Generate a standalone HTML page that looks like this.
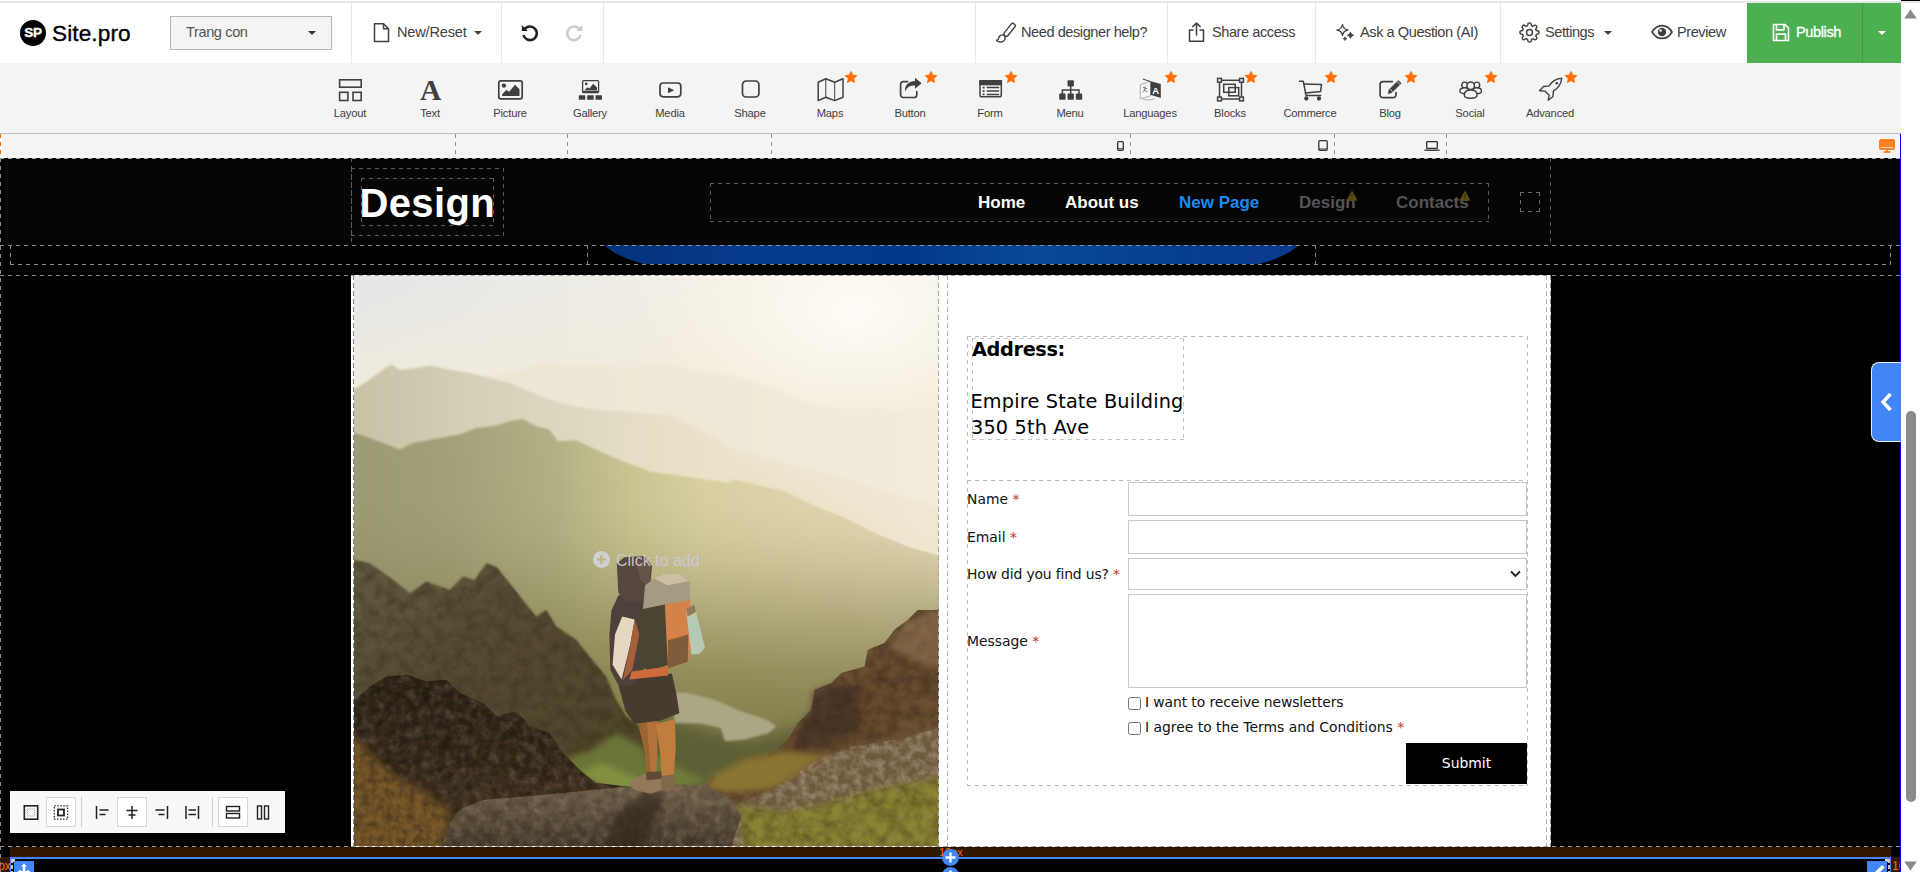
<!DOCTYPE html>
<html lang="en">
<head>
<meta charset="utf-8">
<title>Site.pro Builder</title>
<style>
*{box-sizing:border-box;margin:0;padding:0}
html,body{width:1920px;height:872px;overflow:hidden;background:#000;font-family:"Liberation Sans",sans-serif;}
body{position:relative}
.abs{position:absolute}
/* ---------- top bar ---------- */
#topbar{position:absolute;left:0;top:0;width:1901px;height:63px;background:#fff}
#topline{position:absolute;left:0;top:1px;width:1920px;height:2px;background:#e6e6ec}
.vsep{position:absolute;top:3px;width:1px;height:60px;background:#e9e9e9}
.tb-txt{position:absolute;top:0;height:63px;line-height:64px;font-size:14.6px;letter-spacing:-0.45px;color:#404040;white-space:nowrap}
.caret{position:absolute;width:0;height:0;border-left:4px solid transparent;border-right:4px solid transparent;border-top:4px solid #404040}
#logo-c{position:absolute;left:20px;top:20px;width:26px;height:26px;border-radius:50%;background:#000;color:#fff;font-weight:bold;font-size:13.5px;line-height:26.500px;text-align:center;letter-spacing:-0.2px;-webkit-text-stroke:.4px #fff}
#logo-t{position:absolute;left:52px;top:15px;font-size:22.6px;line-height:38px;color:#000;letter-spacing:0.1px;-webkit-text-stroke:0.35px #000}
#pagesel{position:absolute;left:170px;top:16px;width:162px;height:34px;border:1px solid #b5b5b5;background:#f4f4f4;font-size:14.6px;letter-spacing:-0.4px;line-height:31px;color:#555;padding-left:15px}
#publish{position:absolute;left:1747px;top:3px;width:154px;height:60px;background:#4caf50}
#publish .div{position:absolute;left:115px;top:0;width:1px;height:60px;background:#439a46}
#publish .t{position:absolute;left:49px;top:0;line-height:59px;font-size:14.6px;letter-spacing:-0.4px;color:#fff;-webkit-text-stroke:0.3px #fff}
/* ---------- tool bar ---------- */
#toolbar{position:absolute;left:0;top:63px;width:1901px;height:70px;background:#f4f4f4}
#toolline{position:absolute;left:0;top:133px;width:1901px;height:1px;background:#bdbdbd}
.tool{position:absolute;top:0;width:80px;height:70px;text-align:center}
.tool svg{position:absolute;left:24px;top:13px;width:32px;height:28px;overflow:visible}
.tool .lb{position:absolute;left:-10px;width:100px;top:43px;font-size:11.2px;letter-spacing:-0.2px;line-height:14px;color:#404040;text-align:center}
.tool .star{position:absolute;left:54px;top:7px;width:14px;height:14px}
/* ---------- ruler ---------- */
#ruler{position:absolute;left:0;top:134px;width:1901px;height:24px;background:#f6f3f6}
.rd{position:absolute;top:0;width:1px;height:24px;background:repeating-linear-gradient(180deg,#8f8f8f 0 4.5px,transparent 4.5px 8px)}
/* ---------- canvas ---------- */
#canvas{position:absolute;left:0;top:158px;width:1901px;height:714px;background:#000;overflow:hidden}
#hdr{position:absolute;left:0;top:0;width:1901px;height:87px;background:#050505}
.dh{position:absolute;height:1px;background:repeating-linear-gradient(90deg,var(--c,#8a8a8a) 0 4.5px,transparent 4.5px 8px)}
.dv{position:absolute;width:1px;background:repeating-linear-gradient(180deg,var(--c,#8a8a8a) 0 4.5px,transparent 4.5px 8px)}
.dbox{position:absolute;--c:#6e6e6e;background:repeating-linear-gradient(90deg,var(--c) 0 4.5px,transparent 4.5px 8px) top left/100% 1px no-repeat,repeating-linear-gradient(90deg,var(--c) 0 4.5px,transparent 4.5px 8px) bottom left/100% 1px no-repeat,repeating-linear-gradient(180deg,var(--c) 0 4.5px,transparent 4.5px 8px) top left/1px 100% no-repeat,repeating-linear-gradient(180deg,var(--c) 0 4.5px,transparent 4.5px 8px) top right/1px 100% no-repeat}
.nav{position:absolute;top:35px;font-weight:bold;font-size:17px;line-height:20px;color:#fff;white-space:nowrap}
/* ---------- card ---------- */
#card{position:absolute;left:351px;top:117px;width:1200px;height:572px;background:#fff}
.pp{font-family:"DejaVu Sans","Liberation Sans",sans-serif}
.flabel{position:absolute;left:616px;font-family:"DejaVu Sans","Liberation Sans",sans-serif;font-size:13.900px;line-height:20px;color:#111;white-space:nowrap}
.req{color:#c0392b;-webkit-text-stroke:0}
.finput{position:absolute;left:777px;width:399px;border:1px solid #c9c9c9;background:#fff}
.cb{position:absolute;left:777px;width:13px;height:13px;border:1px solid #6f6f6f;border-radius:2.5px;background:#fff}
/* ---------- overlays ---------- */
#alignbar{position:absolute;left:10px;top:791px;width:275px;height:42px;background:#f8f8f8}
.ab{position:absolute;top:6px;width:30px;height:30px}
.ab.on{background:#fff;border:1px solid #d6d6d6}
.ab svg{position:absolute;left:0;top:0;width:30px;height:30px}
.absep{position:absolute;top:6px;width:1px;height:30px;background:#cfcfcf}
#sb{position:absolute;left:1901px;top:3px;width:19px;height:869px;background:#fff}
#sbthumb{position:absolute;left:5px;top:408px;width:10px;height:391px;border-radius:5px;background:#8b8b8b}
</style>
</head>
<body>
<!-- TOPBAR -->
<div id="topbar">
  <div id="logo-c">SP</div>
  <div id="logo-t">Site.pro</div>
  <div id="pagesel">Trang con<div class="caret" style="left:137px;top:14px;border-top-color:#333"></div></div>
  <div class="vsep" style="left:351px"></div>
  <div class="vsep" style="left:501px"></div>
  <div class="vsep" style="left:603px"></div>
  <div class="vsep" style="left:975px"></div>
  <div class="vsep" style="left:1167px"></div>
  <div class="vsep" style="left:1315px"></div>
  <div class="vsep" style="left:1500px"></div>
  <!-- icons -->
  <svg class="abs" style="left:372px;top:22px" width="20" height="22" viewBox="0 0 20 22" fill="none" stroke="#404040" stroke-width="1.5" stroke-linejoin="round"><path d="M2.5 1.8h9l5 5v12.6h-14z"/><path d="M11.5 1.8v5h5"/></svg>
  <div class="tb-txt" style="left:397px;letter-spacing:-0.2px">New/Reset</div>
  <div class="caret" style="left:474px;top:31px"></div>
  <svg class="abs" style="left:520px;top:23px" width="20" height="20" viewBox="0 0 20 20" fill="none" stroke="#222" stroke-width="2.600"><path d="M4.400 6.400A6.800 6.800 0 1 1 3.400 12"/><path d="M1.800 2v6h6" fill="#222" stroke="none"/></svg>
  <svg class="abs" style="left:564px;top:23px" width="20" height="20" viewBox="0 0 20 20" fill="none" stroke="#cdcdcd" stroke-width="2.600"><path d="M15.600 6.400A6.800 6.800 0 1 0 16.600 12"/><path d="M18.200 2v6h-6" fill="#cdcdcd" stroke="none"/></svg>
  <svg class="abs" style="left:995px;top:22px" width="21" height="21" viewBox="0 0 21 21" fill="none" stroke="#404040" stroke-width="1.400" stroke-linecap="round" stroke-linejoin="round"><rect x="-7.600" y="-2.300" width="15.200" height="4.600" rx="2.300" transform="translate(14.500 7.900) rotate(-51.300)"/><path d="M9.200 13.400c-2.500-1.300-5.200.2-5.500 2.600-.2 1.500-1 2.200-2.200 2.300 1.500 2 5 2.300 7.100.7 1.800-1.300 2-3.900.6-5.600z" fill="#fff"/></svg>
  <div class="tb-txt" style="left:1021px">Need designer help?</div>
  <svg class="abs" style="left:1187px;top:21px" width="19" height="22" viewBox="0 0 19 22" fill="none" stroke="#404040" stroke-width="1.5" stroke-linecap="round" stroke-linejoin="round"><path d="M6 9H2.5v11.200h14V9H13"/><path d="M9.500 14V2.200M5.800 5.600l3.700-3.600 3.700 3.600"/></svg>
  <div class="tb-txt" style="left:1212px">Share access</div>
  <svg class="abs" style="left:1335px;top:22px" width="20" height="20" viewBox="0 0 20 20" fill="none" stroke="#404040" stroke-width="1.300" stroke-linejoin="round"><path d="M7.500 2.500c.6 3.600 1.900 4.900 5.500 5.500-3.600.6-4.900 1.900-5.500 5.500C6.900 9.900 5.600 8.600 2 8c3.600-.6 4.900-1.900 5.500-5.500z"/><path d="M15.500 10.500c.3 1.800.9 2.400 2.700 2.700-1.800.3-2.400.9-2.700 2.700-.3-1.800-.9-2.400-2.700-2.700 1.800-.3 2.400-.9 2.700-2.700z" fill="#404040"/><path d="M10 14.800c.2 1.300.6 1.700 1.900 1.900-1.300.2-1.700.6-1.900 1.900-.2-1.300-.6-1.700-1.900-1.900 1.300-.2 1.700-.6 1.900-1.900z" fill="#404040" stroke-width=".8"/></svg>
  <div class="tb-txt" style="left:1360px">Ask a Question (AI)</div>
  <svg class="abs" style="left:1519px;top:22px" width="21" height="21" viewBox="0 0 24 24" fill="none" stroke="#404040" stroke-width="1.700" stroke-linejoin="round"><circle cx="12" cy="12" r="3.400"/><path d="M19.400 15a1.650 1.650 0 0 0 .33 1.820l.06.06a2 2 0 1 1-2.830 2.830l-.06-.06a1.650 1.650 0 0 0-1.820-.33 1.650 1.650 0 0 0-1 1.510V21a2 2 0 0 1-4 0v-.09A1.650 1.650 0 0 0 9 19.400a1.650 1.650 0 0 0-1.820.33l-.06.06a2 2 0 1 1-2.830-2.830l.06-.06a1.650 1.650 0 0 0 .33-1.820 1.650 1.650 0 0 0-1.510-1H3a2 2 0 0 1 0-4h.09A1.650 1.650 0 0 0 4.600 9a1.650 1.650 0 0 0-.33-1.820l-.06-.06a2 2 0 1 1 2.830-2.830l.06.06a1.650 1.650 0 0 0 1.820.33H9a1.650 1.650 0 0 0 1-1.510V3a2 2 0 0 1 4 0v.09a1.650 1.650 0 0 0 1 1.510 1.650 1.650 0 0 0 1.820-.33l.06-.06a2 2 0 1 1 2.830 2.830l-.06.06a1.650 1.650 0 0 0-.33 1.820V9a1.650 1.650 0 0 0 1.510 1H21a2 2 0 0 1 0 4h-.09a1.650 1.650 0 0 0-1.510 1z"/></svg>
  <div class="tb-txt" style="left:1545px">Settings</div>
  <div class="caret" style="left:1604px;top:31px"></div>
  <svg class="abs" style="left:1651px;top:24px" width="22" height="16" viewBox="0 0 22 16" fill="none" stroke="#404040" stroke-width="1.600"><path d="M1 8c2.500-4.300 6-6.400 10-6.400S18.500 3.700 21 8c-2.500 4.300-6 6.400-10 6.400S3.500 12.300 1 8z"/><circle cx="11" cy="8" r="4.200" fill="#404040" stroke="none"/><circle cx="9.600" cy="6.500" r="1.300" fill="#fff" stroke="none"/></svg>
  <div class="tb-txt" style="left:1677px">Preview</div>
</div>
<div id="publish">
  <svg class="abs" style="left:25px;top:20px" width="18" height="19" viewBox="0 0 18 19" fill="none" stroke="#fff" stroke-width="1.700" stroke-linejoin="round"><path d="M1.500 1.500h11.500l3.500 3.500v12.500h-15z"/><path d="M4.500 1.800v5h7.500v-5M4.500 17.200v-6h9v6"/></svg>
  <div class="t">Publish</div>
  <div class="div"></div>
  <div class="caret" style="left:131px;top:28px;border-top-color:#fff"></div>
</div>
<div id="topline"></div>

<!-- TOOLBAR -->
<div id="toolbar"><div class="tool" style="left:310px"><svg viewBox="0 0 32 28" fill="none" stroke="#404040" stroke-width="1.6"><rect x="5.600" y="3.800" width="21.600" height="7.400"/><rect x="5.600" y="16.300" width="8.300" height="8.200"/><rect x="19" y="16.300" width="8.200" height="8.200"/></svg><div class="lb">Layout</div></div>
<div class="tool" style="left:390px"><svg viewBox="0 0 32 28"><text x="16.600" y="23.700" text-anchor="middle" font-family="Liberation Serif, serif" font-weight="bold" font-size="29.500" fill="#404040">A</text></svg><div class="lb">Text</div></div>
<div class="tool" style="left:470px"><svg viewBox="0 0 32 28" fill="none" stroke="#404040" stroke-width="1.700"><rect x="4.800" y="4.800" width="23.400" height="18" rx="2"/><circle cx="9.900" cy="9.600" r="2.200" fill="#404040" stroke="none"/><path d="M8 20v-1.500l4.300-4.500 2.900 1.700 5.800-7 4.500 4.500v6.800z" fill="#404040" stroke="none"/></svg><div class="lb">Picture</div></div>
<div class="tool" style="left:550px"><svg viewBox="0 0 32 28" fill="#404040" stroke="none"><rect x="8.600" y="4.700" width="16" height="11.800" rx="1" fill="none" stroke="#404040" stroke-width="1.300"/><rect x="8.600" y="15" width="16" height="1.800"/><circle cx="12.200" cy="7.900" r="1.300"/><path d="M10.200 14.500l3.300-3.300 2 1.200 3.700-4.700 3.800 3.800v3z"/><rect x="4.800" y="19.200" width="6.500" height="4.600" rx=".6"/><rect x="13.200" y="19.200" width="6.500" height="4.600" rx=".6"/><rect x="21.500" y="19.200" width="6.500" height="4.600" rx=".6"/></svg><div class="lb">Gallery</div></div>
<div class="tool" style="left:630px"><svg viewBox="0 0 32 28" fill="none" stroke="#404040" stroke-width="1.700"><rect x="6" y="7" width="20.800" height="13.800" rx="3.200"/><path d="M14 11.300l6.200 3-6.200 3z" fill="#404040" stroke="none"/></svg><div class="lb">Media</div></div>
<div class="tool" style="left:710px"><svg viewBox="0 0 32 28" fill="none" stroke="#404040" stroke-width="1.700"><rect x="8.500" y="5" width="16.400" height="16" rx="3.600"/></svg><div class="lb">Shape</div></div>
<div class="tool" style="left:790px"><svg viewBox="0 0 32 28" fill="none" stroke="#404040" stroke-width="1.500" stroke-linejoin="round"><path d="M4.200 6.200l7.600-3.400 8.900 3.400 8.300-3.400v18.500l-8.300 3.300-8.900-3.300-7.600 3.300z"/><path d="M11.800 2.800v18.500M20.700 6.200v18.400" stroke-width="1"/></svg><svg class="star" viewBox="0 0 14 14"><path d="M7 .4l2 4.300 4.700.6-3.500 3.200.9 4.700L7 10.900l-4.100 2.300.9-4.700L.3 5.300 5 4.700z" fill="#ff6f00"/></svg><div class="lb">Maps</div></div>
<div class="tool" style="left:870px"><svg viewBox="0 0 32 28" fill="none" stroke="#404040" stroke-width="1.700" stroke-linecap="round"><path d="M22.800 15.500v3.200a2.800 2.800 0 0 1-2.800 2.800H9.400a2.800 2.800 0 0 1-2.800-2.800V8.400a2.800 2.800 0 0 1 2.800-2.800h4.200"/><path d="M21 1.700l6.600 5.500L21 12.700V9.500c-5 0-8.200 1.500-9.700 6.300-1-6 2.700-10.600 9.700-10.800z" fill="#404040" stroke="none"/></svg><svg class="star" viewBox="0 0 14 14"><path d="M7 .4l2 4.300 4.700.6-3.500 3.200.9 4.700L7 10.900l-4.100 2.300.9-4.700L.3 5.300 5 4.700z" fill="#ff6f00"/></svg><div class="lb">Button</div></div>
<div class="tool" style="left:950px"><svg viewBox="0 0 32 28" fill="none" stroke="#404040" stroke-width="1.500"><rect x="6" y="4.800" width="21.300" height="16" rx="1.800"/><rect x="6" y="4.800" width="21.300" height="3.800" fill="#404040"/><path d="M12.700 11.600h12.500M12.700 15.100h12.500M12.700 18.400h12.500" stroke-width="1.500"/><path d="M8.600 11.600h2M8.600 15.100h2M8.600 18.400h2" stroke-width="1.600"/></svg><svg class="star" viewBox="0 0 14 14"><path d="M7 .4l2 4.300 4.700.6-3.500 3.200.9 4.700L7 10.900l-4.100 2.300.9-4.700L.3 5.300 5 4.700z" fill="#ff6f00"/></svg><div class="lb">Form</div></div>
<div class="tool" style="left:1030px"><svg viewBox="0 0 32 28" fill="#404040" stroke="none"><rect x="13.500" y="4.200" width="6.400" height="6.200" rx=".8"/><rect x="5.200" y="17.600" width="6.400" height="6.200" rx=".8"/><rect x="13.500" y="17.600" width="6.400" height="6.200" rx=".8"/><rect x="21.800" y="17.600" width="6.400" height="6.200" rx=".8"/><path d="M16.700 10v8M8.400 18v-4h16.600v4" fill="none" stroke="#404040" stroke-width="1.500"/></svg><div class="lb">Menu</div></div>
<div class="tool" style="left:1110px"><svg viewBox="0 0 32 28"><path d="M6.300 8.600l10.200-3v14.300l-10.200 2.800z" fill="#fafafa" stroke="#9a9a9a" stroke-width=".8"/><path d="M8.800 3l18 5v14l-10.300-3.300V5.600z" fill="#404040"/><path d="M8.800 3l7.700 2.600" stroke="#404040" stroke-width="1"/><text x="21.700" y="18.300" text-anchor="middle" font-family="Liberation Sans, sans-serif" font-weight="bold" font-size="9.500" fill="#fff">A</text><path d="M9 11.500l4 1.200M11 10.500c.3 3-1 5-2.500 6M10 13.500c.8 1.300 2 2 3.500 2.500" fill="none" stroke="#666" stroke-width=".9"/><path d="M8.500 22.800c3 1.700 9 1.700 12.500-.3" fill="none" stroke="#9a9a9a" stroke-width=".8"/></svg><svg class="star" viewBox="0 0 14 14"><path d="M7 .4l2 4.300 4.700.6-3.500 3.200.9 4.700L7 10.900l-4.100 2.300.9-4.700L.3 5.300 5 4.700z" fill="#ff6f00"/></svg><div class="lb">Languages</div></div>
<div class="tool" style="left:1190px"><svg viewBox="0 0 32 28" fill="none" stroke="#404040" stroke-width="1.500"><rect x="5.500" y="4.300" width="22" height="18.700"/><rect x="3.600" y="2.400" width="3.800" height="3.800" fill="#f4f4f4"/><rect x="25.600" y="2.400" width="3.800" height="3.800" fill="#f4f4f4"/><rect x="3.600" y="21.100" width="3.800" height="3.800" fill="#f4f4f4"/><rect x="25.600" y="21.100" width="3.800" height="3.800" fill="#f4f4f4"/><rect x="9.700" y="8.300" width="11.500" height="8"/><rect x="14.800" y="11.600" width="9.900" height="8.200" fill="#f4f4f4"/><path d="M14.800 16.300h6.400v-4.700" /></svg><svg class="star" viewBox="0 0 14 14"><path d="M7 .4l2 4.300 4.700.6-3.500 3.200.9 4.700L7 10.900l-4.100 2.300.9-4.700L.3 5.300 5 4.700z" fill="#ff6f00"/></svg><div class="lb">Blocks</div></div>
<div class="tool" style="left:1270px"><svg viewBox="0 0 32 28" fill="none" stroke="#404040" stroke-width="1.500" stroke-linejoin="round" stroke-linecap="round"><path d="M5.500 5.300h3.800l2.800 14.200h14.600"/><path d="M10 8l17.500.6-.9 6.800-15.200 1.700"/><circle cx="12.300" cy="22.500" r="1.400" fill="#404040"/><circle cx="25" cy="22.500" r="1.400" fill="#404040"/></svg><svg class="star" viewBox="0 0 14 14"><path d="M7 .4l2 4.300 4.700.6-3.500 3.200.9 4.700L7 10.900l-4.100 2.300.9-4.700L.3 5.300 5 4.700z" fill="#ff6f00"/></svg><div class="lb">Commerce</div></div>
<div class="tool" style="left:1350px"><svg viewBox="0 0 32 28" fill="none" stroke="#404040" stroke-width="1.700" stroke-linecap="round" stroke-linejoin="round"><path d="M22 16.500v2.300a2.800 2.800 0 0 1-2.800 2.800H8.900a2.800 2.800 0 0 1-2.800-2.800V8.400a2.800 2.800 0 0 1 2.800-2.800h9.500"/><path d="M14.200 17.400l.9-3.800 9.200-9.200 2.900 2.900-9.200 9.200z" fill="#404040" stroke-width=".6"/><path d="M16 13l2.400 2.400" stroke="#f4f4f4" stroke-width=".8"/><path d="M23 5.500l2.900 2.900" stroke="#f4f4f4" stroke-width=".8"/></svg><svg class="star" viewBox="0 0 14 14"><path d="M7 .4l2 4.300 4.700.6-3.500 3.200.9 4.700L7 10.900l-4.100 2.300.9-4.700L.3 5.300 5 4.700z" fill="#ff6f00"/></svg><div class="lb">Blog</div></div>
<div class="tool" style="left:1430px"><svg viewBox="0 0 32 28" fill="#f4f4f4" stroke="#404040" stroke-width="1.400"><circle cx="10.600" cy="9" r="2.900"/><circle cx="22.800" cy="9" r="2.900"/><path d="M5.900 15.200c0-2.300 1.800-3.500 4.700-3.500s4.300 1.200 4.300 3.500c0 1.600-1.800 2.400-4.500 2.400s-4.500-.8-4.500-2.400z"/><path d="M18.400 15.200c0-2.300 1.500-3.500 4.400-3.500s4.700 1.200 4.700 3.500c0 1.600-1.800 2.400-4.500 2.400s-4.600-.8-4.600-2.400z"/><path d="M10.300 19c0-3.300 2.400-5 6.400-5s6.400 1.700 6.400 5c0 2.200-2.500 3.200-6.400 3.200s-6.400-1-6.400-3.200z"/><circle cx="16.700" cy="9.700" r="3.700"/></svg><svg class="star" viewBox="0 0 14 14"><path d="M7 .4l2 4.300 4.700.6-3.500 3.200.9 4.700L7 10.900l-4.100 2.300.9-4.700L.3 5.300 5 4.700z" fill="#ff6f00"/></svg><div class="lb">Social</div></div>
<div class="tool" style="left:1510px"><svg viewBox="0 0 32 28" fill="none" stroke="#404040" stroke-width="1.400" stroke-linejoin="round"><path d="M27.700 2.300c-5.500.3-9.600 3-12.600 7.600l-5.600.6-3.900 4.300 5.400.3 4.200 4.200-1 5 4.600-3.500.7-5.700c4.600-3 7.800-7 8.200-12.800z"/><circle cx="22.800" cy="7.300" r="1.300" fill="#404040" stroke="none"/></svg><svg class="star" viewBox="0 0 14 14"><path d="M7 .4l2 4.300 4.700.6-3.500 3.200.9 4.700L7 10.900l-4.100 2.300.9-4.700L.3 5.300 5 4.700z" fill="#ff6f00"/></svg><div class="lb">Advanced</div></div>
</div>
<div id="toolline"></div>

<!-- RULER -->
<div id="ruler"><div class="rd" style="left:455px"></div><div class="rd" style="left:567px"></div><div class="rd" style="left:771px"></div><div class="rd" style="left:1130px"></div><div class="rd" style="left:1334px"></div><div class="rd" style="left:1446px"></div>
<div class="abs" style="left:0;top:0;width:1px;height:24px;background:repeating-linear-gradient(180deg,#ff6f00 0 4.5px,transparent 4.5px 8px)"></div>
<svg class="abs" style="left:1117px;top:7px" width="7" height="10" viewBox="0 0 7 10" fill="none" stroke="#333" stroke-width="1.300"><rect x=".7" y=".7" width="5.600" height="8.600" rx="1"/><path d="M.7 7.800h5.600" stroke-width="1"/></svg>
<svg class="abs" style="left:1318px;top:6px" width="10" height="11" viewBox="0 0 10 11" fill="none" stroke="#333" stroke-width="1.300"><rect x=".8" y=".7" width="8.400" height="9.600" rx="1"/><path d="M.8 9h8.400" stroke-width="1"/></svg>
<svg class="abs" style="left:1424px;top:7px" width="16" height="10" viewBox="0 0 16 10" fill="none" stroke="#333" stroke-width="1.300"><rect x="2.700" y=".7" width="10.600" height="6.600" rx=".6"/><path d="M.5 9.200h15" stroke-width="1.400"/></svg>
<svg class="abs" style="left:1879px;top:5px" width="16" height="14" viewBox="0 0 16 14" fill="none" stroke="#ff6f00" stroke-width="1.300"><rect x=".8" y=".8" width="14.400" height="9.400" rx="1" fill="#ff6f00" fill-opacity=".85"/><path d="M1.500 8.600h13" stroke="#f6f3f6" stroke-width=".8"/><path d="M8 10.200v2M4.500 13h7" stroke-width="1.500"/></svg>
</div>

<!-- CANVAS -->
<div id="canvas"><div id="hdr"></div>
<div class="dh" style="left:0;top:0;width:1901px;--c:#a8a8a8"></div>
<div class="dv" style="left:351px;top:0;height:87px;--c:#5a5a5a"></div>
<div class="dv" style="left:1550px;top:0;height:87px;--c:#5a5a5a"></div>
<div class="dbox" style="left:351px;top:10px;width:153px;height:68px;--c:#5a5a5a"></div>
<div class="dbox" style="left:361px;top:20px;width:133px;height:48px;--c:#5a5a5a"></div>
<div class="abs" style="left:359.500px;top:22px;font-weight:bold;font-size:40px;line-height:46px;color:#fff;letter-spacing:.35px">Design</div>
<div class="dbox" style="left:710px;top:25px;width:779px;height:39px;--c:#5e5e5e"></div>
<div class="nav" style="left:978px">Home</div>
<div class="nav" style="left:1065px">About us</div>
<div class="nav" style="left:1179px;color:#1b8bf2">New Page</div>
<div class="nav" style="left:1299px;color:#555">Design</div>
<div class="nav" style="left:1396px;color:#555">Contacts</div>
<svg class="abs" style="left:1346px;top:32px" width="12" height="11" viewBox="0 0 12 11"><path d="M6 .6l5.500 9.800H.5z" fill="#5b4d14"/><path d="M6 4v3.300M6 8.300v1" stroke="#2a2408" stroke-width="1"/></svg>
<svg class="abs" style="left:1459px;top:32px" width="12" height="11" viewBox="0 0 12 11"><path d="M6 .6l5.500 9.800H.5z" fill="#5b4d14"/><path d="M6 4v3.300M6 8.300v1" stroke="#2a2408" stroke-width="1"/></svg>
<div class="dbox" style="left:1520px;top:34px;width:20px;height:20px;--c:#6a6a6a"></div>
<!-- second row -->
<div class="abs" style="left:587px;top:87px;width:729px;height:19px;overflow:hidden"><div class="abs" style="left:10px;top:-300px;width:709px;height:325px;border-radius:0 0 100px 100px / 0 0 40px 40px;background:linear-gradient(90deg,#06327c 0%,#063a8a 20%,#04398a 45%,#074a96 62%,#063f90 80%,#0a3a8c 100%)"></div></div>
<div class="dh" style="left:0;top:87px;width:1901px"></div>
<div class="dh" style="left:10px;top:106px;width:1881px"></div>
<div class="dv" style="left:10px;top:87px;height:20px"></div>
<div class="dv" style="left:587px;top:87px;height:20px"></div>
<div class="dv" style="left:1315px;top:87px;height:20px"></div>
<div class="dv" style="left:1890px;top:87px;height:20px"></div>
<div class="dh" style="left:0;top:117px;width:1901px"></div>
<!-- card -->
<div id="card">
<svg class="abs" style="left:3px;top:1px" width="585" height="570" viewBox="0 0 585 570" preserveAspectRatio="none">
<defs>
<linearGradient id="sky" x1="0" y1="0" x2="1" y2="0"><stop offset="0" stop-color="#e3e5e8"/><stop offset=".35" stop-color="#ecebe6"/><stop offset=".7" stop-color="#f5f1ea"/><stop offset="1" stop-color="#f7f3ec"/></linearGradient>
<linearGradient id="skyv" x1="0" y1="0" x2="0" y2="1"><stop offset="0" stop-color="#f1ebdc" stop-opacity="0"/><stop offset=".55" stop-color="#f1ebdc" stop-opacity=".7"/><stop offset="1" stop-color="#f0eadb" stop-opacity="1"/></linearGradient>
<radialGradient id="sun" cx="0.5" cy="0.5" r="0.5"><stop offset="0" stop-color="#fffdf8" stop-opacity=".95"/><stop offset=".5" stop-color="#fbf6ea" stop-opacity=".6"/><stop offset="1" stop-color="#f8f0dc" stop-opacity="0"/></radialGradient>
<linearGradient id="m1" x1="0" y1="0" x2="1" y2="0"><stop offset="0" stop-color="#ebe6d4"/><stop offset=".4" stop-color="#eee8d6"/><stop offset="1" stop-color="#f4ecdb"/></linearGradient>
<linearGradient id="m2" x1="0" y1="0" x2="1" y2="0"><stop offset="0" stop-color="#c6c2a5"/><stop offset=".2" stop-color="#d4cfb6"/><stop offset=".35" stop-color="#ddd7c0"/><stop offset=".6" stop-color="#ebe3cd"/><stop offset="1" stop-color="#f1e8d4"/></linearGradient>
<linearGradient id="m2b" x1="0" y1="0" x2="1" y2="0"><stop offset="0" stop-color="#e6dec0"/><stop offset=".6" stop-color="#ece3c8"/><stop offset="1" stop-color="#f0e6d0"/></linearGradient>
<linearGradient id="m3" x1="0" y1="0" x2="1" y2="0"><stop offset="0" stop-color="#9b9b74"/><stop offset=".17" stop-color="#a2a179"/><stop offset=".34" stop-color="#b2b084"/><stop offset=".48" stop-color="#cbc694"/><stop offset=".6" stop-color="#dad1a4"/><stop offset=".77" stop-color="#e1d6ae"/><stop offset="1" stop-color="#e6dbb8"/></linearGradient>
<linearGradient id="m3v" gradientUnits="userSpaceOnUse" x1="0" y1="150" x2="0" y2="450"><stop offset="0" stop-color="#7a7642" stop-opacity="0"/><stop offset=".25" stop-color="#7a7642" stop-opacity=".03"/><stop offset=".36" stop-color="#7a7642" stop-opacity=".09"/><stop offset=".46" stop-color="#7a7642" stop-opacity=".2"/><stop offset=".56" stop-color="#7a7642" stop-opacity=".35"/><stop offset=".68" stop-color="#7a7642" stop-opacity=".54"/><stop offset=".83" stop-color="#787440" stop-opacity=".73"/><stop offset="1" stop-color="#74703c" stop-opacity=".85"/></linearGradient>
<linearGradient id="val" x1="0" y1="0" x2="1" y2="0"><stop offset="0" stop-color="#84895a"/><stop offset=".5" stop-color="#9c9a64"/><stop offset="1" stop-color="#bcae7a"/></linearGradient>
<linearGradient id="valv" x1="0" y1="0" x2="0" y2="1"><stop offset="0" stop-color="#6e7040" stop-opacity="0"/><stop offset="1" stop-color="#5c5e34" stop-opacity=".95"/></linearGradient>
<linearGradient id="f1" x1="0" y1="0" x2="1" y2="1"><stop offset="0" stop-color="#625a42"/><stop offset=".4" stop-color="#564c34"/><stop offset="1" stop-color="#4c4328"/></linearGradient>
<linearGradient id="f2" x1="0" y1="0" x2="0" y2="1"><stop offset="0" stop-color="#29221a"/><stop offset=".5" stop-color="#352b20"/><stop offset="1" stop-color="#503f28"/></linearGradient>
<linearGradient id="rr" x1="0" y1="0" x2="1" y2="1"><stop offset="0" stop-color="#84684a"/><stop offset=".55" stop-color="#654a30"/><stop offset="1" stop-color="#7a6238"/></linearGradient>
<linearGradient id="rock" x1="0" y1="0" x2="0" y2="1"><stop offset="0" stop-color="#766650"/><stop offset="1" stop-color="#3e3428"/></linearGradient>
<filter id="b1" x="-5%" y="-5%" width="110%" height="110%"><feGaussianBlur stdDeviation="1.2"/></filter>
<filter id="b3" x="-10%" y="-10%" width="120%" height="120%"><feGaussianBlur stdDeviation="3"/></filter>
<filter id="b8" x="-20%" y="-20%" width="140%" height="140%"><feGaussianBlur stdDeviation="8"/></filter>
<filter id="b20" x="-30%" y="-30%" width="160%" height="160%"><feGaussianBlur stdDeviation="20"/></filter>
<filter id="rough" x="0" y="0" width="100%" height="100%"><feTurbulence type="fractalNoise" baseFrequency="0.09" numOctaves="3" seed="7" result="n"/><feColorMatrix in="n" type="matrix" values="0 0 0 0 0  0 0 0 0 0  0 0 0 0 0  1.6 0 0 0 -0.55" result="a"/><feComposite in="SourceGraphic" in2="a" operator="in"/></filter>
<filter id="rough2" x="0" y="0" width="100%" height="100%"><feTurbulence type="fractalNoise" baseFrequency="0.13" numOctaves="3" seed="23" result="n"/><feColorMatrix in="n" type="matrix" values="0 0 0 0 0  0 0 0 0 0  0 0 0 0 0  1.8 0 0 0 -0.62" result="a"/><feComposite in="SourceGraphic" in2="a" operator="in"/></filter>
<clipPath id="pc"><rect x="0" y="0" width="585" height="570"/></clipPath>
</defs>
<g clip-path="url(#pc)">
<rect width="585" height="570" fill="url(#sky)"/>
<rect width="585" height="140" fill="url(#skyv)"/>
<rect y="139" width="585" height="431" fill="#f0eadb"/>
<ellipse cx="500" cy="36" rx="230" ry="150" fill="url(#sun)"/>
<path d="M127.4 100.4 L149.0 98.1 L168.9 93.8 L188.9 87.1 L202.2 88.8 L228.8 89.5 L248.7 88.1 L262.0 92.1 L295.3 90.5 L291.0 89.5 L314.3 88.1 L334.2 93.8 L374.1 98.8 L400.7 105.4 L430.7 117.1 L463.9 130.4 L490.5 133.7 L523.8 132.0 L553.7 137.0 L587.0 135.3 L590.0 570.0 L120.0 570.0Z" fill="url(#m1)" filter="url(#b1)"/>
<path d="M-4.0 115.4 L1.0 113.1 L12.6 105.4 L25.9 96.1 L33.2 90.5 L37.6 88.8 L45.9 93.8 L62.5 92.1 L75.8 89.5 L95.8 93.8 L115.7 97.1 L135.7 102.1 L155.6 107.1 L175.6 115.4 L195.5 123.7 L222.1 130.4 L242.1 133.7 L268.7 135.3 L295.3 138.7 L291.0 138.0 L317.6 140.3 L340.9 150.3 L360.8 162.0 L377.5 171.9 L424.0 185.2 L490.5 201.9 L587.0 231.8 L590.0 570.0 L-5.0 570.0Z" fill="url(#m2)" filter="url(#b1)"/>
<path d="M274.4 142.0 L291.0 137.0 L317.6 140.3 L340.9 150.3 L360.8 162.0 L370.8 175.3 L390.8 185.2 L430.7 198.5 L477.2 218.5 L523.8 238.4 L587.0 261.7 L590.0 570.0 L250.0 570.0Z" fill="url(#m2b)" opacity=".55" filter="url(#b3)"/>
<path d="M-4.0 155.3 L1.0 157.0 L16.0 162.0 L32.6 168.6 L45.9 173.6 L59.2 166.9 L85.8 162.0 L105.7 158.6 L122.4 152.0 L139.0 150.3 L155.6 145.3 L168.9 143.0 L182.2 150.3 L195.5 153.6 L203.8 165.3 L222.1 164.3 L245.4 175.3 L268.7 185.2 L295.3 195.2 L291.0 195.2 L317.6 198.5 L340.9 201.9 L374.1 206.8 L380.8 203.5 L400.7 208.5 L430.7 215.2 L457.3 228.5 L490.5 241.8 L523.8 258.4 L557.0 271.7 L587.0 280.0 L590.0 570.0 L-5.0 570.0Z" fill="url(#m3)" filter="url(#b1)"/>
<path d="M-4.0 155.3 L1.0 157.0 L16.0 162.0 L32.6 168.6 L45.9 173.6 L59.2 166.9 L85.8 162.0 L105.7 158.6 L122.4 152.0 L139.0 150.3 L155.6 145.3 L168.9 143.0 L182.2 150.3 L195.5 153.6 L203.8 165.3 L222.1 164.3 L245.4 175.3 L268.7 185.2 L295.3 195.2 L291.0 195.2 L317.6 198.5 L340.9 201.9 L374.1 206.8 L380.8 203.5 L400.7 208.5 L430.7 215.2 L457.3 228.5 L490.5 241.8 L523.8 258.4 L557.0 271.7 L587.0 280.0 L590.0 570.0 L-5.0 570.0Z" fill="url(#m3v)" />
<rect x="0" y="270" width="585" height="300" fill="url(#val)" opacity=".0"/>
<path d="M311.0 440.3 L327.6 447.0 L367.5 456.9 L390.8 465.2 L424.0 456.9 L447.3 450.3 L447.3 516.8 L291.0 516.8 L291.0 456.9Z" fill="#5d5f36" filter="url(#b8)"/>
<path d="M321.6 416.4 L334.2 417.0 L360.8 423.7 L387.4 435.3 L414.0 444.3 L422.4 450.3 L414.7 456.9 L390.8 463.6 L370.8 465.2 L366.8 451.9 L347.5 447.6 L320.9 447.0 L318.9 433.7Z" fill="#a9a786" filter="url(#b1)"/>
<path d="M-4.0 280.7 L1.0 284.0 L16.0 287.3 L39.2 304.0 L55.9 317.3 L72.5 305.6 L95.8 313.9 L109.1 300.6 L120.7 304.0 L132.3 287.3 L142.3 290.7 L155.6 307.3 L168.9 323.9 L182.2 340.5 L192.2 333.9 L202.2 350.5 L222.1 363.8 L235.4 380.4 L252.1 400.4 L262.0 423.7 L272.0 440.3 L285.3 450.3 L295.3 470.2 L295.3 516.8 L-4.0 516.8Z" fill="url(#f1)" filter="url(#b1)"/>
<path d="M-4.0 280.7 L1.0 284.0 L16.0 287.3 L39.2 304.0 L55.9 317.3 L72.5 305.6 L95.8 313.9 L109.1 300.6 L120.7 304.0 L132.3 287.3 L142.3 290.7 L155.6 307.3 L168.9 323.9 L182.2 340.5 L192.2 333.9 L202.2 350.5 L222.1 363.8 L235.4 380.4 L252.1 400.4 L262.0 423.7 L272.0 440.3 L285.3 450.3 L295.3 470.2 L295.3 516.8 L-4.0 516.8Z" fill="#332a18" filter="url(#rough)" opacity=".55"/>
<path d="M208.8 483.5 L235.4 475.2 L262.0 456.9 L275.3 463.6 L288.7 470.2 L295.3 496.8 L288.7 516.8 L228.8 516.8 L195.5 500.2Z" fill="#6b7537" filter="url(#b3)"/>
<path d="M291.0 470.2 L311.0 483.5 L334.2 496.8 L352.5 503.5 L324.3 513.5 L291.0 513.5Z" fill="#6f7a38" filter="url(#b3)"/>
<path d="M225.5 496.8 L248.7 486.9 L278.7 500.2 L296.0 513.5 L291.0 513.5 L311.0 513.5 L324.3 516.8 L291.0 516.8 L296.0 516.8 L255.4 513.5Z" fill="#86943f" filter="url(#b3)" opacity=".9"/>
<path d="M-4.0 427.0 L1.0 423.7 L16.0 410.4 L32.6 400.4 L52.5 398.7 L72.5 405.4 L92.4 403.7 L105.7 417.0 L129.0 427.0 L142.3 440.3 L162.3 435.3 L175.6 450.3 L195.5 456.9 L208.8 476.9 L228.8 496.8 L242.1 506.8 L296.0 513.5 L296.0 576.7 L-4.0 576.7Z" fill="url(#f2)"/>
<path d="M-4.0 427.0 L1.0 423.7 L16.0 410.4 L32.6 400.4 L52.5 398.7 L72.5 405.4 L92.4 403.7 L105.7 417.0 L129.0 427.0 L142.3 440.3 L162.3 435.3 L175.6 450.3 L195.5 456.9 L208.8 476.9 L228.8 496.8 L242.1 506.8 L296.0 513.5 L296.0 576.7 L-4.0 576.7Z" fill="#7a6446" filter="url(#rough2)" opacity=".55"/>
<path d="M-4.0 427.0 L1.0 423.7 L16.0 410.4 L32.6 400.4 L52.5 398.7 L72.5 405.4 L92.4 403.7 L105.7 417.0 L129.0 427.0 L142.3 440.3 L162.3 435.3 L175.6 450.3 L195.5 456.9 L208.8 476.9 L228.8 496.8 L242.1 506.8 L296.0 513.5 L296.0 576.7 L-4.0 576.7Z" fill="#18120a" filter="url(#rough)" opacity=".75"/>
<path d="M-4.0 456.9 L9.3 470.2 L25.9 486.9 L45.9 503.5 L72.5 516.8 L95.8 536.7 L89.1 576.7 L-4.0 576.7Z" fill="#86642f" opacity=".8" filter="url(#b3)"/>
<path d="M-4.0 456.9 L9.3 470.2 L25.9 486.9 L45.9 503.5 L72.5 516.8 L95.8 536.7 L89.1 576.7 L-4.0 576.7Z" fill="#2a2012" filter="url(#rough2)" opacity=".6"/>
<path d="M590.3 332.2 L583.7 333.9 L563.7 333.9 L553.7 343.9 L540.4 353.8 L530.4 367.1 L513.8 373.8 L510.5 390.4 L487.2 397.1 L477.2 407.0 L460.6 413.7 L457.3 433.7 L444.0 447.0 L434.0 463.6 L417.4 476.9 L390.8 486.9 L357.5 500.2 L350.9 513.5 L357.5 576.7 L590.3 576.7Z" fill="url(#rr)"/>
<path d="M590.3 332.2 L583.7 333.9 L563.7 333.9 L553.7 343.9 L540.4 353.8 L530.4 367.1 L513.8 373.8 L510.5 390.4 L487.2 397.1 L477.2 407.0 L460.6 413.7 L457.3 433.7 L444.0 447.0 L434.0 463.6 L417.4 476.9 L390.8 486.9 L357.5 500.2 L350.9 513.5 L357.5 576.7 L590.3 576.7Z" fill="#2a1c10" filter="url(#rough)" opacity=".55"/>
<path d="M458.9 415.4 L477.2 408.7 L507.2 410.4 L503.8 456.9 L463.9 470.2 L437.3 473.6 L447.3 447.0 L457.3 433.7Z" fill="#36261a" opacity=".55" filter="url(#b3)"/>
<path d="M553.7 343.9 L583.7 333.9 L590.3 333.9 L590.3 393.7 L557.0 383.8 L537.1 370.5Z" fill="#9a7c58" opacity=".5" filter="url(#b3)"/>
<path d="M357.5 500.2 L390.8 483.5 L430.7 475.2 L477.2 480.2 L490.5 496.8 L450.6 503.5 L417.4 513.5 L377.5 516.8 L354.2 513.5Z" fill="#8a7432" filter="url(#b3)"/>
<path d="M563.7 470.2 L583.7 460.3 L590.3 463.6 L590.3 490.2 L567.0 491.8Z" fill="#6a7030" filter="url(#b3)"/>
<path d="M463.9 483.5 L497.2 470.2 L543.7 463.6 L590.3 450.3 L590.3 576.7 L377.5 576.7 L380.8 530.1 L417.4 513.5Z" fill="#6e5a3c" filter="url(#b3)"/>
<path d="M463.9 483.5 L497.2 470.2 L543.7 463.6 L590.3 450.3 L590.3 576.7 L377.5 576.7 L380.8 530.1 L417.4 513.5Z" fill="#b8aa98" filter="url(#rough2)" opacity=".6"/>
<path d="M384.1 530.1 L430.7 536.7 L477.2 526.8 L523.8 513.5 L590.3 500.2 L590.3 576.7 L390.8 576.7Z" fill="#8a8234" filter="url(#b3)"/>
<path d="M384.1 530.1 L430.7 536.7 L477.2 526.8 L523.8 513.5 L590.3 500.2 L590.3 576.7 L390.8 576.7Z" fill="#3c3a16" filter="url(#rough)" opacity=".6"/>
<path d="M85.8 576.7 L95.8 546.7 L105.7 533.4 L129.0 524.1 L212.2 516.8 L278.7 510.1 L296.0 510.8 L291.0 513.5 L324.3 508.5 L350.9 510.1 L374.1 520.1 L387.4 540.1 L380.8 560.0 L374.1 576.7Z" fill="url(#rock)"/>
<path d="M85.8 576.7 L95.8 546.7 L105.7 533.4 L129.0 524.1 L212.2 516.8 L278.7 510.1 L296.0 510.8 L291.0 513.5 L324.3 508.5 L350.9 510.1 L374.1 520.1 L387.4 540.1 L380.8 560.0 L374.1 576.7Z" fill="#a08c6c" filter="url(#rough2)" opacity=".4"/>
<path d="M85.8 576.7 L95.8 546.7 L105.7 533.4 L129.0 524.1 L212.2 516.8 L278.7 510.1 L296.0 510.8 L291.0 513.5 L324.3 508.5 L350.9 510.1 L374.1 520.1 L387.4 540.1 L380.8 560.0 L374.1 576.7Z" fill="#2c241a" filter="url(#rough)" opacity=".5"/>
<path d="M248.7 576.7 L258.7 543.4 L278.7 523.4 L296.0 516.8 L291.0 516.8 L311.0 523.4 L297.7 550.0 L291.0 576.7Z" fill="#30281e" opacity=".7" filter="url(#b3)"/>
<path d="M283.7 444.8 L303.9 443.3 L303.3 474.5 L302.1 499.9 L292.6 500.8 L291.1 477.5Z" fill="#b4733a"/>
<path d="M302.1 447.7 L320.9 443.3 L321.8 471.6 L319.4 501.9 L307.5 502.8 L306.3 477.5Z" fill="#c07e3e"/>
<path d="M283.7 444.8 L292.6 444.8 L297.1 499.9 L292.6 500.8 L291.1 477.5Z" fill="#8a5a2e" opacity=".6"/>
<path d="M277.7 504.3 L291.1 496.9 L307.5 497.8 L309.0 513.3 L297.1 517.7 L280.7 513.9 L275.3 508.8Z" fill="#93795a"/>
<path d="M306.9 499.9 L320.0 498.4 L321.8 510.9 L314.0 516.2 L307.5 513.9Z" fill="#80684c"/>
<path d="M292.0 496.0 L307.5 495.4 L307.5 502.8 L292.6 504.3Z" fill="#5a4a38"/>
<path d="M264.3 409.0 L276.2 400.1 L317.9 397.7 L322.4 417.9 L325.4 437.3 L306.0 444.8 L280.7 447.7 L271.7 435.8Z" fill="#463b2e"/>
<path d="M264.3 319.6 L288.1 313.7 L292.6 343.5 L289.6 394.1 L280.7 409.0 L264.3 409.0 L256.3 394.1 L255.4 358.4 L257.4 334.5Z" fill="#4d413c"/>
<path d="M268.2 340.5 L280.7 343.5 L276.2 368.8 L267.6 403.6 L258.6 388.7 L261.0 358.4Z" fill="#e4d8c2"/>
<path d="M280.7 343.5 L285.4 358.4 L278.3 394.1 L268.8 404.5 L276.2 368.8Z" fill="#a55f3a"/>
<path d="M262.8 287.5 L270.6 280.9 L290.2 280.3 L298.0 289.9 L296.2 310.7 L289.6 325.6 L271.7 325.6 L264.3 316.7Z" fill="#56483f"/>
<path d="M280.7 282.1 L296.8 290.4 L295.0 310.7 L286.6 304.7Z" fill="#6a594a" opacity=".8"/>
<path d="M286.6 328.6 L313.5 322.6 L315.8 388.2 L295.6 395.6 L283.7 388.2 L285.2 358.4Z" fill="#4b4430"/>
<path d="M310.5 321.1 L335.8 319.6 L337.9 358.4 L334.3 385.2 L314.0 392.6 L312.3 358.4Z" fill="#d4814a"/>
<path d="M314.0 364.3 L334.3 358.4 L333.7 385.8 L314.0 392.6Z" fill="#6a5236" opacity=".8"/>
<path d="M291.1 309.2 L306.0 298.2 L325.4 297.6 L335.8 306.2 L336.1 324.1 L310.5 328.6 L289.0 333.0Z" fill="#a59b82"/>
<path d="M300.0 302.4 L307.5 298.2 L325.4 297.6 L334.3 305.3 L313.5 309.2Z" fill="#cbbfa3"/>
<path d="M277.7 395.6 L314.0 390.5 L314.0 399.5 L275.3 403.6Z" fill="#cf6a3a"/>
<path d="M331.9 333.0 L340.3 328.6 L351.0 371.8 L345.6 377.7 L337.3 378.6Z" fill="#b7c9b4"/>
<path d="M331.9 333.0 L340.3 328.6 L342.0 336.0 L333.7 340.5Z" fill="#8f7a5a"/>
</g>
</svg>
<div class="dh" style="left:0;top:0;width:1200px;--c:#9a9a9a"></div>
<div class="dv" style="left:2px;top:0;height:572px;--c:#888"></div>
<div class="dv" style="left:587px;top:0;height:572px;--c:#aaa"></div>
<div class="dv" style="left:596px;top:0;height:572px;--c:#b5b5b5"></div>
<div class="dv" style="left:1195px;top:0;height:572px;--c:#b5b5b5"></div>
<div class="dv" style="left:1199px;top:0;height:572px;--c:#999"></div>
<div class="dh" style="left:0;top:571px;width:1200px;--c:#aaa"></div>
<!-- click to add -->
<svg class="abs" style="left:242px;top:276px" width="17" height="17" viewBox="0 0 17 17"><circle cx="8.500" cy="8.500" r="8.500" fill="#d2d2d8" fill-opacity=".95"/><path d="M8.500 4v9M4 8.500h9" stroke="#bcb67e" stroke-width="2.200"/></svg>
<div class="abs" style="left:265px;top:276px;font-size:16px;line-height:20px;color:rgba(204,204,214,.95);white-space:nowrap">Click to add</div>
<!-- address -->
<div class="dbox" style="left:616px;top:61px;width:561px;height:145px;--c:#bdbdbd"></div>
<div class="dbox" style="left:621px;top:63px;width:212px;height:102px;--c:#c4c4c4"></div>
<div class="abs pp" style="left:621px;top:62px;font-size:19.300px;line-height:26px;color:#000;white-space:nowrap"><b style="letter-spacing:-.35px">Address:</b><br><br><span style="margin-left:-1.500px;letter-spacing:.17px">Empire State Building</span><br><span style="margin-left:-1px;letter-spacing:.17px">350 5th Ave</span></div>
<!-- form -->
<div class="dbox" style="left:616px;top:205px;width:561px;height:306px;--c:#bdbdbd"></div>
<div class="flabel" style="top:214px">Name <span class="req">*</span></div>
<div class="finput" style="top:207px;height:34px"></div>
<div class="flabel" style="top:252px">Email <span class="req">*</span></div>
<div class="finput" style="top:245px;height:34px"></div>
<div class="flabel" style="top:289px;letter-spacing:-.15px">How did you find us? <span class="req">*</span></div>
<div class="finput" style="top:283px;height:32px"><svg class="abs" style="left:381px;top:11px" width="11" height="8" viewBox="0 0 11 8" fill="none" stroke="#222" stroke-width="1.800"><path d="M1 1.500l4.500 4.500 4.500-4.500"/></svg></div>
<div class="flabel" style="top:356px">Message <span class="req">*</span></div>
<div class="finput" style="top:319px;height:94px"></div>
<div class="cb" style="top:422px"></div>
<div class="flabel" style="left:794px;top:417px;letter-spacing:-.1px">I want to receive newsletters</div>
<div class="cb" style="top:447px"></div>
<div class="flabel" style="left:794px;top:442px">I agree to the Terms and Conditions <span class="req">*</span></div>
<div class="abs" style="left:1055px;top:468px;width:121px;height:41px;background:#000;color:#fff;font-family:'DejaVu Sans','Liberation Sans',sans-serif;font-size:13.900px;line-height:40px;text-align:center">Submit</div>
</div>
<!-- bottom -->
<div class="dh" style="left:0;top:688px;width:1901px;--c:#999"></div>
<div class="abs" style="left:10px;top:689px;width:1881px;height:10px;background:#331800"></div>
<div class="abs" style="left:0;top:699px;width:10px;height:15px;background:#331800"></div>
<div class="abs" style="left:1891px;top:699px;width:9px;height:15px;background:#331800"></div>
<div class="abs" style="left:10px;top:699px;width:1881px;height:2px;background:#4285f4"></div>
<div class="abs" style="left:10px;top:699px;width:1px;height:15px;background:#4285f4"></div>
<div class="abs" style="left:1890px;top:699px;width:1px;height:15px;background:#4285f4"></div>
<div class="abs" style="left:11px;top:701px;width:4px;height:3px;background:#d8d0c4"></div>
<div class="abs" style="left:11px;top:701px;width:2px;height:13px;background:repeating-linear-gradient(180deg,#cfc6ba 0 4px,transparent 4px 6px)"></div>
<div class="abs" style="left:1885px;top:701px;width:5px;height:3px;background:#d8d0c4"></div>
<div class="abs" style="left:1888px;top:701px;width:2px;height:13px;background:repeating-linear-gradient(180deg,#cfc6ba 0 4px,transparent 4px 6px)"></div>
<div class="abs" style="left:14px;top:703px;width:20px;height:11px;background:#4285f4"><svg class="abs" style="left:3px;top:2px" width="14" height="9" viewBox="0 0 14 9"><path d="M7 .3l3 3.200H8.200V9H5.800V3.500H4z" fill="#fff"/><path d="M.5 9l3.200-2.800V9zM13.500 9l-3.200-2.800V9z" fill="#fff"/><path d="M2 8h10v1H2z" fill="#fff"/></svg></div>
<div class="abs" style="left:1867px;top:703px;width:20px;height:11px;background:#4285f4"><svg class="abs" style="left:4px;top:2px" width="14" height="9" viewBox="0 0 14 9"><path d="M4 9l7-7 2.600 2.600L9.200 9z" fill="#fff"/></svg></div>
<div class="abs" style="left:0;top:703px;font-size:12px;line-height:11px;color:#ff6a00;letter-spacing:-.3px;margin-left:-8px">0px</div>
<div class="abs" style="left:1892px;top:703px;width:8px;overflow:hidden;font-size:12px;line-height:11px;color:#ff6a00;white-space:nowrap">10px</div>
<div class="abs" style="left:939px;top:689px;font-size:11px;line-height:11px;color:#ff6a00">10px</div>
<div class="abs" style="left:942px;top:691px;width:17px;height:17px;border-radius:50%;background:#4285f4"><svg class="abs" style="left:3px;top:3px" width="11" height="11" viewBox="0 0 11 11"><path d="M5.500 .5v10M.5 5.500h10" stroke="#fff" stroke-width="2.400"/></svg></div>
<div class="abs" style="left:942px;top:709px;width:17px;height:17px;border-radius:50%;background:#4285f4"><svg class="abs" style="left:3px;top:3px" width="11" height="11" viewBox="0 0 11 11"><path d="M5.500 .5v10M.5 5.500h10" stroke="#fff" stroke-width="2.400"/></svg></div>
</div>

<!-- OVERLAYS -->
<div class="abs" style="left:1900px;top:134px;width:1px;height:738px;background:#0000f0"></div>
<div class="abs" style="left:0;top:158px;width:1px;height:714px;background:repeating-linear-gradient(180deg,#8a8a8a 0 4.5px,transparent 4.5px 8px)"></div>
<div class="abs" style="left:1871px;top:362px;width:30px;height:80px;background:#4285f4;border:1px solid #e8eefc;border-right:none;border-radius:8px 0 0 8px"><svg class="abs" style="left:8px;top:29px" width="13" height="20" viewBox="0 0 13 20" fill="none" stroke="#fff" stroke-width="3.400"><path d="M10.500 2L3 10l7.500 8"/></svg></div>
<div id="alignbar">
  <div class="ab" style="left:6px"><svg viewBox="0 0 30 30" fill="none" stroke="#222" stroke-width="1.600"><rect x="8.300" y="8.800" width="13.400" height="13.400"/><rect x="11.500" y="12" width="7" height="7" stroke="#999" stroke-width="1" stroke-dasharray="1 1"/></svg></div>
  <div class="ab on" style="left:36px"><svg viewBox="0 0 30 30" fill="none" stroke="#222" stroke-width="1.600" style="left:-1px;top:-1px"><rect x="8.300" y="8.800" width="13.400" height="13.400" stroke-width="1.200" stroke-dasharray="1.500 1.500"/><rect x="12" y="12.500" width="6" height="6" stroke-width="1.800"/></svg></div>
  <div class="absep" style="left:71px"></div>
  <div class="ab" style="left:77px"><svg viewBox="0 0 30 30" fill="none" stroke="#222" stroke-width="1.500"><path d="M9.500 9v13M12.500 13h9M12.500 17.500h6"/></svg></div>
  <div class="ab on" style="left:107px"><svg viewBox="0 0 30 30" fill="none" stroke="#222" stroke-width="1.500" style="left:-1px;top:-1px"><path d="M15 9v13M9.500 13.500h11M11.500 18h7"/></svg></div>
  <div class="ab" style="left:137px"><svg viewBox="0 0 30 30" fill="none" stroke="#222" stroke-width="1.500"><path d="M20.500 9v13M8.500 13h9M11.500 17.500h6"/></svg></div>
  <div class="ab" style="left:167px"><svg viewBox="0 0 30 30" fill="none" stroke="#222" stroke-width="1.500"><path d="M9 9v13M21.500 9v13M11.500 13h7.500M11.500 17.500h7.500"/></svg></div>
  <div class="absep" style="left:202px"></div>
  <div class="ab on" style="left:208px"><svg viewBox="0 0 30 30" fill="none" stroke="#222" stroke-width="1.400" style="left:-1px;top:-1px"><rect x="8.500" y="9.500" width="13" height="4.500"/><rect x="8.500" y="16.500" width="13" height="4.500"/></svg></div>
  <div class="ab" style="left:238px"><svg viewBox="0 0 30 30" fill="none" stroke="#222" stroke-width="1.400"><rect x="9.500" y="9" width="4" height="13"/><rect x="16.500" y="9" width="4" height="13"/></svg></div>
</div>

<div id="sb">
  <svg class="abs" style="left:3px;top:6px" width="13" height="10" viewBox="0 0 13 10"><path d="M6.500 0.500L12.800 9.500H0.200z" fill="#8b8b8b"/></svg>
  <div id="sbthumb"></div>
  <svg class="abs" style="left:3px;top:858px" width="13" height="10" viewBox="0 0 13 10"><path d="M6.500 9.500L12.800 0.500H0.200z" fill="#8b8b8b"/></svg>
</div>
</body>
</html>
